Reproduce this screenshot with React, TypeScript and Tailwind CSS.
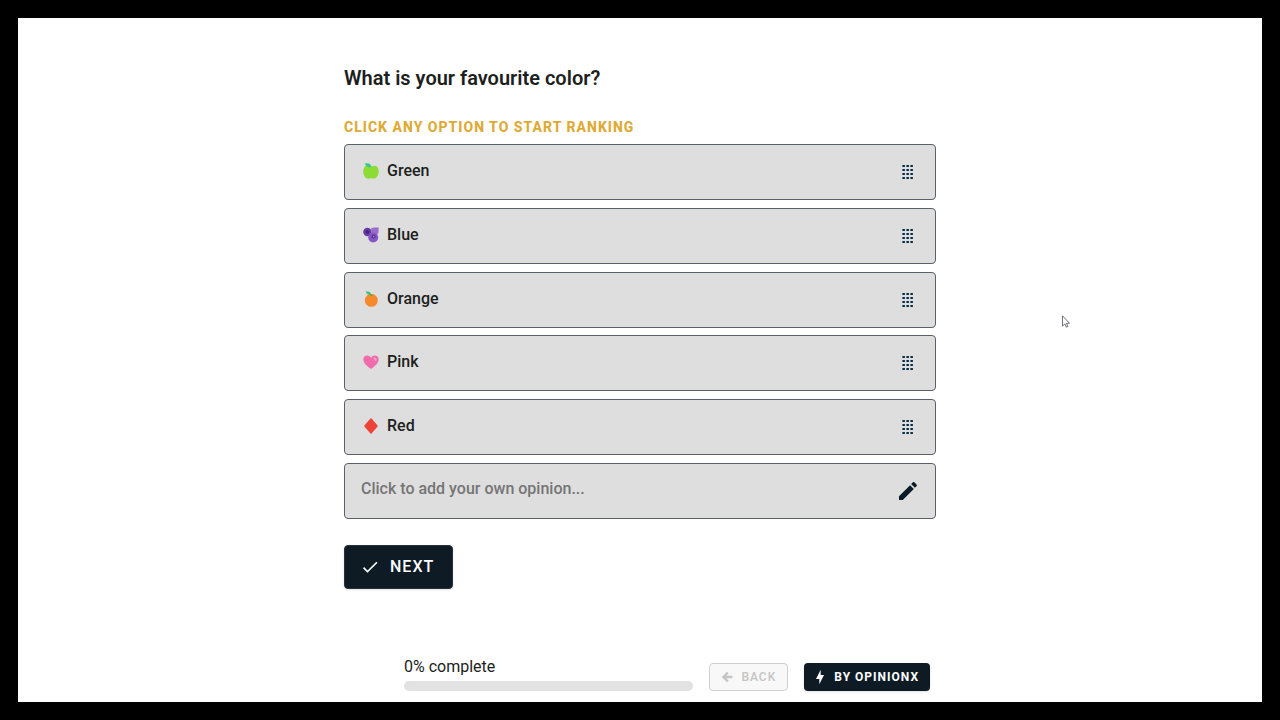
import React, { useState } from 'react';

interface Option {
  id: string;
  label: string;
  icon: React.ReactNode;
}

const GreenApple = () => (
  <svg viewBox="0 0 16 16" className="w-4 h-4" aria-hidden="true">
    <path d="M8 4C5-.2.5 3 .3 8c-.2 5 2.700 8 5.700 7.700 1 0 1.300-.4 2.200-.4s1.300.4 2.300.4c3 0 5.400-3.500 5.200-7.700C15.500 3 11.500 1.500 8 4z" fill="#8fdb36" />
    <path d="M8.500 4.600C6.800 4.500 3 4 1.800.7 5.500-.3 8 .8 8.500 4.600z" fill="#38c98a" />
  </svg>
);

const Blueberries = () => (
  <svg viewBox="0 0 16 16" className="w-4 h-4" aria-hidden="true">
    <path d="M8 1.500C10 .2 13 .7 15.700.5c-.2 2.500.3 5-1.200 7L9 7z" fill="#9b6bd0" />
    <circle cx="4.400" cy="5" r="4.200" fill="#6a3ca5" />
    <circle cx="10.200" cy="10.500" r="5" fill="#8656c8" />
    <path d="M2.500 3.800l2-.8 2 1.200-.4 2-2 .6-1.600-1z" fill="#472477" />
    <path d="M9 7.500l3 .3 1 2.200-2.200 1.800-2.400-1z" fill="#55308c" />
    <circle cx="10.800" cy="9.600" r=".8" fill="#b995e5" />
  </svg>
);

const Tangerine = () => (
  <svg viewBox="0 0 16 16" className="w-4 h-4" aria-hidden="true">
    <circle cx="8.300" cy="9.300" r="6.500" fill="#f58a2c" />
    <path d="M8.200 4.500C5.500 4.300 3.600 3 2.800.8c3-.8 5.200.3 5.400 3.700z" fill="#38c172" />
    <path d="M7.500 4.500l1.600-1 .4 1.300z" fill="#27955a" />
  </svg>
);

const PinkHeart = () => (
  <svg viewBox="0 0 16 16" className="w-4 h-4" aria-hidden="true">
    <path d="M8 15C4.500 12.500.3 9.300.3 5.300.3 1.200 5.700.2 8 3.700 10.300.2 15.700 1.200 15.700 5.300c0 4-4.200 7.200-7.700 9.700z" fill="#f06cac" />
    <path d="M10.300 3.800c2-1 3.600.3 3.200 2.200-.4 1.300-1.400 1.500-1.700.4-.2-1-1-1.500-1.500-2.600z" fill="#f8a5cb" />
  </svg>
);

const RedDiamond = () => (
  <svg viewBox="0 0 16 16" className="w-4 h-4" aria-hidden="true">
    <path d="M8 .3c.4 0 .7.200 1 .6l5.400 6.300c.5.5.5 1.100 0 1.600L9 15.100c-.5.700-1.500.7-2 0L1.600 8.800c-.5-.5-.5-1.100 0-1.600L7 .9c.3-.4.6-.6 1-.6z" fill="#ee4438" />
  </svg>
);

const DragHandle = () => (
  <svg viewBox="0 0 12 14" className="w-3 h-3.5" fill="#062c48" aria-hidden="true">
    {[0, 4, 8, 12].map((y) =>
      [0.4, 4.4, 8.4].map((x) => <rect key={`${x}-${y}`} x={x} y={y} width="2.5" height="2" />)
    )}
  </svg>
);

interface GlyphProps {
  path: string;
  className: string;
}

const Glyph: React.FC<GlyphProps> = ({ path, className }) => (
  <svg viewBox="0 0 24 24" className={className} fill="currentColor" aria-hidden="true">
    <path d={path} />
  </svg>
);

const CHECK = 'M21,7L9,19L3.5,13.5L4.91,12.09L9,16.17L19.59,5.59L21,7Z';
const PENCIL =
  'M20.71,7.04C21.1,6.65 21.1,6 20.71,5.63L18.37,3.29C18,2.9 17.35,2.9 16.96,3.29L15.12,5.12L18.87,8.87M3,17.25V21H6.75L17.81,9.93L14.06,6.18L3,17.25Z';
const ARROW_LEFT = 'M20,10V14H11L14.5,17.5L12.08,19.92L4.16,12L12.08,4.08L14.5,6.5L11,10H20Z';
const BOLT = 'M11 15H6L13 1V9H18L11 23V15Z';

const options: Option[] = [
  { id: 'green', label: 'Green', icon: <GreenApple /> },
  { id: 'blue', label: 'Blue', icon: <Blueberries /> },
  { id: 'orange', label: 'Orange', icon: <Tangerine /> },
  { id: 'pink', label: 'Pink', icon: <PinkHeart /> },
  { id: 'red', label: 'Red', icon: <RedDiamond /> },
];

const App: React.FC = () => {
  const [opinion, setOpinion] = useState('');

  return (
    <div className="relative flex flex-col min-h-screen bg-white border-[18px] border-black font-['Roboto',sans-serif] text-[#1c1e20]">
      <main className="w-full max-w-[592px] mx-auto pt-12">
        <h1 className="text-xl leading-6 font-semibold">What is your favourite color?</h1>
        <p className="mt-7 text-sm leading-[18px] font-extrabold tracking-[1px] uppercase text-[#deaa36]">
          Click any option to start ranking
        </p>

        <div className="mt-2 flex flex-col justify-between min-h-[375px]">
          {options.map((option) => (
            <button
              key={option.id}
              type="button"
              className="w-full h-14 pl-[18px] pr-[21px] flex items-center bg-[#dedede] border border-[#59616a] rounded text-left"
            >
              <span className="flex items-center gap-2 pb-0.5">
                {option.icon}
                <span className="text-base font-medium">{option.label}</span>
              </span>
              <span className="ml-auto">
                <DragHandle />
              </span>
            </button>
          ))}
          <label className="w-full h-14 pl-4 pr-[15px] flex items-center bg-[#dedede] border border-[#59616a] rounded">
            <input
              type="text"
              aria-label="Your own opinion"
              placeholder="Click to add your own opinion..."
              value={opinion}
              onChange={(e) => setOpinion(e.target.value)}
              className="flex-1 min-w-0 pb-1 bg-transparent outline-none text-base font-medium placeholder:text-[#757575]"
            />
            <Glyph path={PENCIL} className="w-6 h-6 text-[#0b1b27]" />
          </label>
        </div>

        <button
          type="button"
          className="mt-[26px] h-11 pl-[15px] pr-[18px] flex items-center gap-2.5 bg-[#0e1b25] border border-[#25313b] rounded text-white text-base font-medium tracking-[1px] shadow"
        >
          <Glyph path={CHECK} className="w-5 h-5" />
          NEXT
        </button>
      </main>

      <footer className="w-full max-w-[592px] mx-auto mt-auto pl-[60px] pr-1.5 pb-[11px] flex items-end">
        <div className="flex-1">
          <p id="progress-label" className="text-base leading-6">0% complete</p>
          <div
            role="progressbar"
            aria-labelledby="progress-label"
            aria-valuenow={0}
            aria-valuemin={0}
            aria-valuemax={100}
            className="mt-0.5 h-2.5 rounded-full bg-[#e2e2e2]"
          />
        </div>
        <button
          type="button"
          disabled
          className="ml-4 h-7 pl-[9px] pr-[11px] flex items-center gap-1.5 bg-[#f8f8f8] border border-[#cfcfcf] rounded text-xs font-medium tracking-[1px] text-[#c4c4c4]"
        >
          <Glyph path={ARROW_LEFT} className="w-4 h-4" />
          BACK
        </button>
        <a
          href="#opinionx"
          className="ml-4 h-7 pl-2 pr-[11px] flex items-center gap-1.5 bg-[#0e1b25] rounded text-xs font-bold tracking-[1px] text-white shadow"
        >
          <Glyph path={BOLT} className="w-4 h-4" />
          BY OPINIONX
        </a>
      </footer>

      {/* mouse pointer */}
      <svg viewBox="0 0 8 13" className="absolute left-[1044px] top-[297px] w-2 h-[13px]" aria-hidden="true">
        <path d="M.5.8v10.300l2.400-2.200 1.500 3.300 1.500-.7-1.500-3.200h3.100z" fill="#fff" stroke="#60606a" strokeWidth=".9" />
      </svg>
    </div>
  );
};

export default App;
